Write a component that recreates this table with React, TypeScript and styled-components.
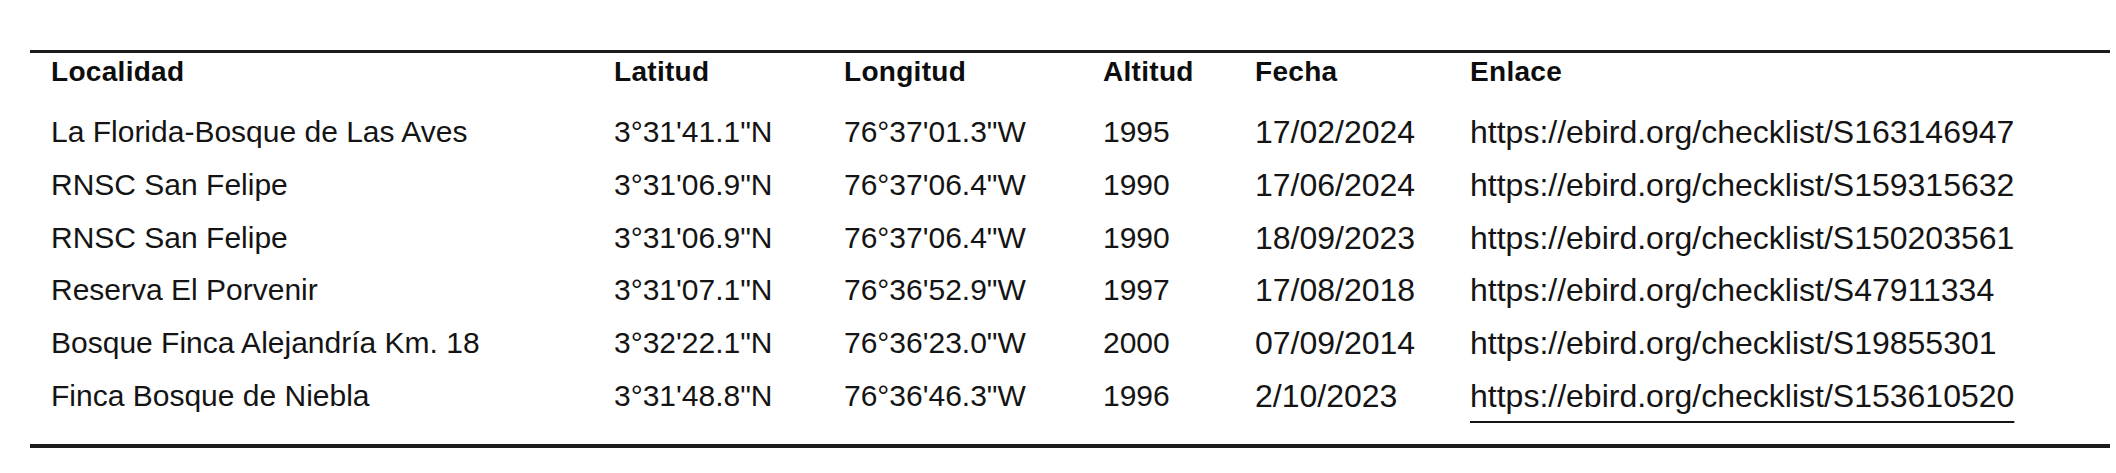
import styled, { createGlobalStyle } from "styled-components";

const GlobalStyle = createGlobalStyle`
    html, body {
        margin: 0;
        padding: 0;
        background: #ffffff;
    }
    body {
        font-family: 'Liberation Sans', Arial, sans-serif;
        color: #111;
    }
`

interface Record {
    place: string;
    lat: string;
    lon: string;
    alt: string;
    date: string;
    link: string;
    linked?: boolean;
}

const records: Record[] = [
    { place: 'La Florida-Bosque de Las Aves', lat: `3°31'41.1"N`, lon: `76°37'01.3"W`, alt: '1995', date: '17/02/2024', link: 'https://ebird.org/checklist/S163146947' },
    { place: 'RNSC San Felipe', lat: `3°31'06.9"N`, lon: `76°37'06.4"W`, alt: '1990', date: '17/06/2024', link: 'https://ebird.org/checklist/S159315632' },
    { place: 'RNSC San Felipe', lat: `3°31'06.9"N`, lon: `76°37'06.4"W`, alt: '1990', date: '18/09/2023', link: 'https://ebird.org/checklist/S150203561' },
    { place: 'Reserva El Porvenir', lat: `3°31'07.1"N`, lon: `76°36'52.9"W`, alt: '1997', date: '17/08/2018', link: 'https://ebird.org/checklist/S47911334' },
    { place: 'Bosque Finca Alejandría Km. 18', lat: `3°32'22.1"N`, lon: `76°36'23.0"W`, alt: '2000', date: '07/09/2014', link: 'https://ebird.org/checklist/S19855301' },
    { place: 'Finca Bosque de Niebla', lat: `3°31'48.8"N`, lon: `76°36'46.3"W`, alt: '1996', date: '2/10/2023', link: 'https://ebird.org/checklist/S153610520', linked: true },
]

const headers = ['Localidad', 'Latitud', 'Longitud', 'Altitud', 'Fecha', 'Enlace']

export default function App() {
    return (
        <>
            <GlobalStyle />
            <Page>
                <Table>
                    <HeadRow>
                        {headers.map((h) => (
                            <HeadCell key={h}>{h}</HeadCell>
                        ))}
                    </HeadRow>
                    {records.map((r, i) => (
                        <Row key={i}>
                            <Cell>{r.place}</Cell>
                            <Cell>{r.lat}</Cell>
                            <Cell>{r.lon}</Cell>
                            <Cell>{r.alt}</Cell>
                            <Cell $wide>{r.date}</Cell>
                            <Cell $wide>
                                {r.linked ? <Anchor href={r.link}>{r.link}</Anchor> : r.link}
                            </Cell>
                        </Row>
                    ))}
                </Table>
            </Page>
        </>
    )
}

const Page = styled.div`
    width: 2116px;
    height: 473px;
    padding: 50px 6px 0 30px;
    box-sizing: border-box;
`

const Table = styled.div`
    border-top: 3px solid #1c1c1c;
    border-bottom: 4px solid #1c1c1c;
    padding-bottom: 21px;
`

const columns = '563px 230px 259px 152px 215px 1fr'

const HeadRow = styled.div`
    display: grid;
    grid-template-columns: ${columns};
    padding: 2px 0 17px 21px;
    height: 34px;
`

const HeadCell = styled.div`
    font-size: 28px;
    font-weight: 700;
    letter-spacing: 0.3px;
    line-height: 34px;
    white-space: nowrap;
    color: #0d0d0d;
`

const Row = styled.div`
    display: grid;
    grid-template-columns: ${columns};
    padding-left: 21px;
    height: 52.8px;
`

const Cell = styled.div<{ $wide?: boolean }>`
    font-size: ${(p) => (p.$wide ? '32px' : '30px')};
    line-height: 52.8px;
    white-space: nowrap;
    color: #141414;
`

const Anchor = styled.a`
    color: #141414;
    text-decoration: underline;
    text-decoration-thickness: 2px;
    text-underline-offset: 14px;
`
